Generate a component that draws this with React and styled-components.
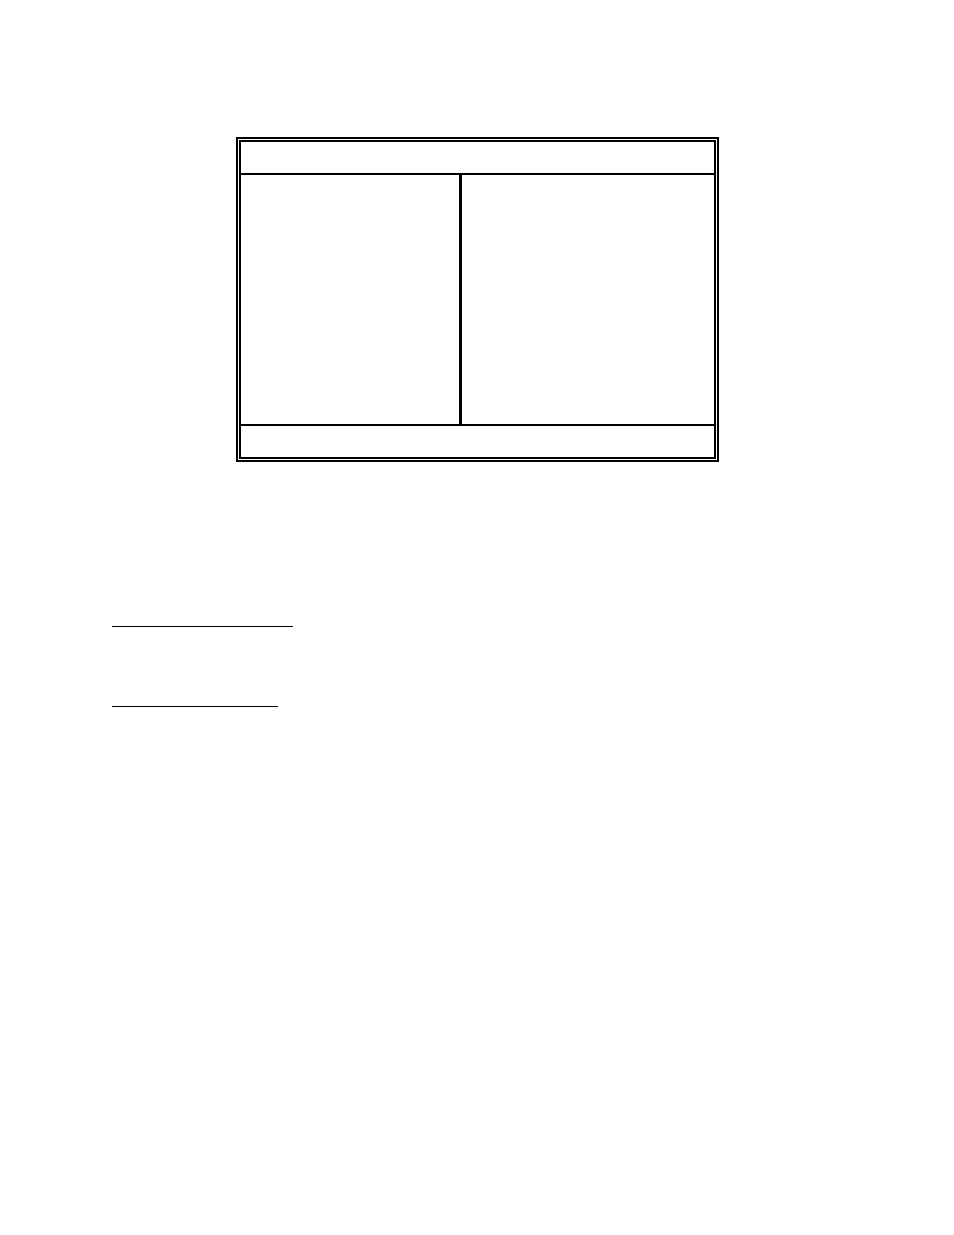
import styled, { createGlobalStyle } from 'styled-components';

const GlobalStyle = createGlobalStyle`
  body {
    margin: 0;
    background: #ffffff;
  }
`;

const App = () => {
  return (
    <>
      <GlobalStyle />
      <Page>
        <Frame>
          <Band />
          <Columns>
            <Column $share={218} $divider />
            <Column $share={252} />
          </Columns>
          <Band />
        </Frame>
        <Rules>
          <Rule $width={181} />
          <Rule $width={166} />
        </Rules>
      </Page>
    </>
  );
};

const Page = styled.main`
  padding: 137px 111px 112px 112px;
`;

const Frame = styled.section`
  box-sizing: border-box;
  max-width: 483px;
  margin: 0 auto;
  border: 5px double #000000;
`;

const Band = styled.div`
  height: 31px;
`;

const Columns = styled.div`
  display: flex;
  min-height: 249px;
  border-top: 2px solid #000000;
  border-bottom: 2px solid #000000;
`;

const Column = styled.div`
  flex: ${({ $share }) => $share} 1 0;
  border-right: ${({ $divider }) => ($divider ? '3px solid #000000' : 'none')};
`;

const Rules = styled.div`
  display: flex;
  flex-direction: column;
  gap: 79px;
  margin-top: 164px;
`;

const Rule = styled.hr`
  width: 100%;
  max-width: ${({ $width }) => $width}px;
  height: 1px;
  margin: 0;
  border: none;
  background: #000000;
`;

export default App;
